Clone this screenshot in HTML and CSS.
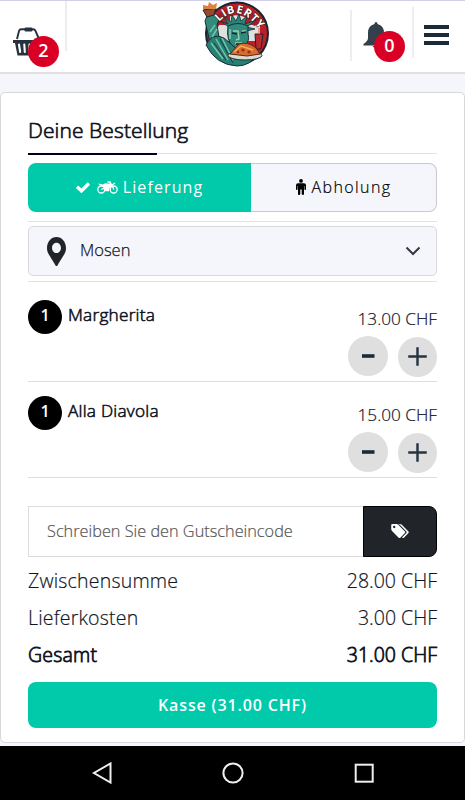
FILE: index.html
```
<!DOCTYPE html>
<html lang="de">
<head>
  <meta charset="UTF-8">
  <meta name="viewport" content="width=device-width, initial-scale=1.0">
  <title>Liberty | Deine Bestellung</title>
  <link rel="stylesheet" href="styles.css">
</head>
<body>
  <header class="topbar">
    <a href="#" class="cart">
      <svg class="basket" viewBox="0 0 28 29">
        <path d="M4 12 6 4Q6.500 2.200 8.500 2.200h11.500Q22 2.200 22.500 4L26 12" fill="none" stroke="#26323e" stroke-width="1.900"/>
        <rect x="11.500" y=".5" width="8" height="4" rx="1.300" fill="#26323e"/>
        <path d="M0 13h29v3h-1.500L25 28.500H4.500L2 16H0z" fill="#26323e"/>
        <path d="M6 17.500l1.200 7.500M11.300 17.500l.5 7.500M16.500 17.500l-.3 7.500" stroke="#fff" stroke-width="2.100" stroke-linecap="round"/>
      </svg>
      <span class="count">2</span>
    </a>
    <a href="#" class="logo">
      <svg viewBox="0 0 68 66">
        <circle cx="35" cy="32.500" r="32" fill="#19242e"/>
        <circle cx="35" cy="32.500" r="30" fill="#bc1f28"/>
        <path d="M28 13h15v11h15v16H43v13H28V40H13V24h15z" fill="#dfe1df"/>
        <path d="M9 24a28 28 0 0 1 51-2l-8 3a20 20 0 0 0-36 1z" fill="#a31d26"/>
        <path id="arc" d="M17 21Q36 0 57 28" fill="none"/>
        <!-- arm and torch -->
        <path d="M3 20 5 15l9-2 3 5-2 6 3 18-9 4z" fill="#328a7c" stroke="#14313a"/>
        <path d="M1 9l13-2-2 7-7 2z" fill="#98482c" stroke="#21242a"/>
        <path d="M1 8V4l5 1 1-4 4 3 4-2-1 6z" fill="#dc8240"/>
        <!-- robe -->
        <path d="M4 44q6-13 18-7l12 10 10-1 12 7q-8 12-21 12Q14 64 4 44z" fill="#287f73" stroke="#14313a"/>
        <path d="M9 42l12 16M14 38l12 21M20 37l11 22M8 31l5-7M10 36l5-8" stroke="#72c5a5" stroke-width="1.500"/>
        <path d="M12 42l12 17M18 38l13 24" stroke="#163f47"/>
        <!-- crown and face -->
        <path d="M27 26 18 20l8 3-4-7 7 5 1-7 4 6 3-7 2 7 6-5-2 8 11-4-9 7 8 2-13 3z" fill="#2b8278" stroke="#14313a" stroke-width=".8"/>
        <path d="M26 25q10-5 20 0v8q2 7-3 11l-6 5-6-4q-7-5-5-20z" fill="#328a7c" stroke="#14313a"/>
        <path d="M31 30h5l1 8-3 1M40 30h4M33 42h7M28 28v10" fill="none" stroke="#90d6b4" stroke-width="1.400"/>
        <path d="M30 32l5 1M39 32l5-1M34 43h6" stroke="#12262f" stroke-width="1.500"/>
        <text class="logo-text"><textPath href="#arc">LIBERTY</textPath></text>
        <!-- drink, pizza and plate -->
        <path d="M53 33h8l-2 15h-5z" fill="#b92932" stroke="#251f29"/>
        <path d="M57 33v-6" stroke="#e77a6b" stroke-width="1.300"/>
        <ellipse cx="43" cy="54.500" rx="17" ry="4.500" fill="#dad9ce" stroke="#202b32"/>
        <path d="M28 53 37 43q9-3 17 4l4 6-13 2z" fill="#d76d2d" stroke="#522720"/>
        <path d="M32 51l7-6 12 4" stroke="#f0b157" stroke-width="1.500" fill="none"/>
        <circle cx="41" cy="49" r="1.600" fill="#982b22"/><circle cx="47" cy="51" r="1.600" fill="#982b22"/><circle cx="36" cy="51" r="1.200" fill="#982b22"/>
      </svg>
    </a>
    <a href="#" class="alerts">
      <svg class="bell" viewBox="0 0 26 26">
        <path d="M13 0q1.500 0 1.500 2 6.500 1.500 6.500 9v5q0 3 4.500 6v1.500H.5V22Q5 19 5 16v-5q0-7.500 6.500-9 0-2 1.500-2zM9.500 24h7q-1 2-3.500 2t-3.500-2z" fill="#333f4b"/>
      </svg>
      <span class="count">0</span>
    </a>
    <a href="#" class="menu">
      <span></span><span></span><span></span>
    </a>
  </header>

  <main class="order">
    <h1>Deine Bestellung</h1>

    <div class="toggle">
      <button class="option active">
        <svg class="check" viewBox="121 270 1550 1252"><path d="M1671 566q0 40-28 68l-724 724-136 136q-28 28-68 28t-68-28l-136-136-362-362q-28-28-28-68t28-68l136-136q28-28 68-28t68 28l294 295 656-657q28-28 68-28t68 28l136 136q28 28 28 68z" fill="#fff"/></svg>
        <svg class="bike" viewBox="0 0 21 13">
          <g fill="none" stroke="#fff">
            <circle cx="4.300" cy="8.500" r="3.500" stroke-width="1.300"/>
            <circle cx="16.700" cy="8.500" r="3.500" stroke-width="1.300"/>
            <path d="M10.500 1H13l4 7.500M15 4l3-2" stroke-width="1.300"/>
          </g>
          <path d="M1.500 2.500 6 3.500q3-1.800 5-.8l2-.5 2 2-2.500 3-.5 3H8.500L7.500 8 4 9V8l3-1.500L5.500 5 2 4z" fill="#fff"/>
        </svg>
        <span>Lieferung</span>
      </button>
      <button class="option">
        <svg class="person" viewBox="0 0 10 16">
          <circle cx="5" cy="1.900" r="1.900"/>
          <path d="M2 4.200h6q2 0 2 2v4q0 .8-.8.800t-.8-.8V7H8v8q0 1-1 1t-1.300-1v-4.500H4.300V15q0 1-1.300 1t-1-1V7h-.4v3.200q0 .8-.8.800T0 10.200v-4q0-2 2-2z"/>
        </svg>
        <span>Abholung</span>
      </button>
    </div>

    <div class="place">
      <div class="select">
        <svg class="pin" viewBox="0 0 384 512" preserveAspectRatio="none"><path d="M172.268 501.670C26.970 291.031 0 269.413 0 192 0 85.961 85.961 0 192 0s192 85.961 192 192c0 77.413-26.970 99.031-172.268 309.670-9.535 13.774-29.930 13.773-39.464 0zM192 282c50 0 90-40 90-90s-40-90-90-90-90 40-90 90 40 90 90 90z" fill="#212529"/></svg>
        <span>Mosen</span>
        <svg class="chevron" viewBox="0 0 16 10"><path d="M1.500 1.500 8 8l6.500-6.500" fill="none" stroke="#343a40" stroke-width="2"/></svg>
      </div>
    </div>

    <div class="item">
      <span class="qty">1</span>
      <h2>Margherita</h2>
      <div class="side">
        <span class="price">13.00 CHF</span>
        <div class="buttons">
          <button class="minus"><svg viewBox="0 0 40 40"><path d="M14 20h12.500" stroke="#1c2b39" stroke-width="3.600"/></svg></button>
          <button class="plus"><svg viewBox="0 0 40 40"><path d="M10.500 19h19M20 9.500v19" stroke="#263442" stroke-width="2.500"/></svg></button>
        </div>
      </div>
    </div>
    <div class="item">
      <span class="qty">1</span>
      <h2>Alla Diavola</h2>
      <div class="side">
        <span class="price">15.00 CHF</span>
        <div class="buttons">
          <button class="minus"><svg viewBox="0 0 40 40"><path d="M14 20h12.500" stroke="#1c2b39" stroke-width="3.600"/></svg></button>
          <button class="plus"><svg viewBox="0 0 40 40"><path d="M10.500 19h19M20 9.500v19" stroke="#263442" stroke-width="2.500"/></svg></button>
        </div>
      </div>
    </div>

    <form class="coupon">
      <input type="text" placeholder="Schreiben Sie den Gutscheincode">
      <button type="button">
        <svg viewBox="0 128 1899 1515"><path d="M448 448q0-53-37.500-90.500t-90.500-37.500-90.500 37.500-37.500 90.500 37.500 90.500 90.500 37.500 90.500-37.500 37.500-90.500zm1067 576q0 53-37 90l-491 492q-39 37-91 37-53 0-90-37l-715-716q-38-37-64.500-101t-26.500-117v-416q0-52 38-90t90-38h416q53 0 117 26.500t102 64.500l715 714q37 39 37 91zm384 0q0 53-37 90l-491 492q-39 37-91 37-36 0-59-14t-53-45l470-470q37-37 37-90 0-52-37-91l-715-714q-38-38-102-64.500t-117-26.500h224q53 0 117 26.500t102 64.500l715 714q37 39 37 91z" fill="#fff"/></svg>
      </button>
    </form>

    <div class="totals">
      <p><span>Zwischensumme</span><span>28.00 CHF</span></p>
      <p><span>Lieferkosten</span><span>3.00 CHF</span></p>
      <p class="total"><span>Gesamt</span><span>31.00 CHF</span></p>
    </div>

    <button class="checkout">Kasse (31.00 CHF)</button>
  </main>

  <footer class="navbar">
    <svg viewBox="0 0 22 22"><path d="M19.500 1.500v19L3 11z"/></svg>
    <svg viewBox="0 0 22 22"><circle cx="11" cy="11" r="9.600"/></svg>
    <svg viewBox="0 0 22 22"><rect x="2.700" y="2.700" width="17" height="17"/></svg>
  </footer>
</body>
</html>
```
FILE: styles.css
```
:root {
  --green: #00caaa;
  --red: #da0025;
  --ink: #10151f;
  --line: #e2e2ee;
}

* {
  box-sizing: border-box;
}

body {
  margin: 0;
  height: 800px;
  display: flex;
  flex-direction: column;
  overflow: hidden;
  font-family: "Open Sans", sans-serif;
  font-weight: 300;
  background: #f5f6fb;
  color: var(--ink);
}

svg {
  display: block;
  flex: none;
}

button {
  font: inherit;
  border: 0;
  padding: 0;
}

/* Header */
.topbar {
  flex: none;
  display: flex;
  height: 74px;
  background: #fff;
  border-top: 1px solid #d2cfe8;
  border-bottom: 2px solid #e0e0e3;
}
.topbar a {
  color: inherit;
  text-decoration: none;
}
.cart {
  display: flex;
  width: 67px;
  height: 50px;
  padding: 26px 0 0 13px;
  border-right: 2px solid #ededf0;
}
.basket {
  width: 28px;
  height: 29px;
}
.count {
  flex: none;
  width: 31px;
  height: 31px;
  margin: 9px 0 0 -13px;
  border-radius: 50%;
  background: var(--red);
  color: #fff;
  font-size: 18px;
  font-weight: 600;
  line-height: 29px;
  text-align: center;
  z-index: 1;
}
.logo {
  margin-left: 135px;
}
.logo svg {
  width: 68px;
  height: 66px;
}
.logo-text {
  font-size: 11px;
  font-weight: 700;
  fill: #fff;
  stroke: #222;
  stroke-width: 1px;
  paint-order: stroke;
  letter-spacing: 0.800px;
}
.alerts {
  display: flex;
  width: 62px;
  height: 51px;
  margin: 9px 0 0 80px;
  padding: 12px 0 0 11px;
  border-left: 2px solid #eeeef0;
}
.bell {
  width: 26px;
  height: 26px;
}
.alerts .count {
  margin-left: -15px;
}
.menu {
  display: flex;
  flex-direction: column;
  gap: 4px;
  width: 53px;
  height: 51px;
  margin-top: 6px;
  padding: 18px 0 0 10px;
  border-left: 2px solid #eeeef0;
}
.menu span {
  width: 25px;
  height: 4px;
  background: #1b2b39;
}

/* Order card */
.order {
  flex: none;
  height: 651px;
  margin-top: 18px;
  padding: 24px 27px 0;
  background: #fff;
  border: 1px solid #d8d8dc;
  border-radius: 5px;
}
h1 {
  height: 37px;
  margin: 0 0 9px;
  border-bottom: 1px solid var(--line);
  font-size: 21px;
  font-weight: 300;
  line-height: 26px;
  letter-spacing: 0.100px;
  -webkit-text-stroke: 0.700px var(--ink);
}
h1::after {
  content: "";
  display: block;
  width: 129px;
  height: 2px;
  margin-top: 10px;
  background: #000018;
}
.toggle {
  display: flex;
  height: 49px;
}
.option {
  display: flex;
  flex: 1;
  justify-content: center;
  align-items: center;
  gap: 6px;
  background: #f5f6fb;
  border: 1px solid #c9cacf;
  border-left: 0;
  border-radius: 0 8px 8px 0;
  color: #000;
  font-size: 16px;
  line-height: 22px;
  letter-spacing: 1.400px;
  padding-bottom: 1px;
  -webkit-text-stroke: 0.200px #000;
}
.option.active {
  flex: none;
  width: 223px;
  gap: 5px;
  background: var(--green);
  border: 0;
  border-radius: 8px 0 0 8px;
  color: #fff;
  font-weight: 400;
  letter-spacing: 1.100px;
  -webkit-text-stroke: 0;
}
.check {
  width: 14px;
  height: 11px;
  margin-right: 2px;
}
.bike {
  width: 21px;
  height: 13px;
}
.person {
  width: 10px;
  height: 16px;
}
.place {
  height: 61px;
  margin-top: 9px;
  padding-top: 4px;
  border-top: 1px solid var(--line);
  border-bottom: 1px solid var(--line);
}
.select {
  display: flex;
  align-items: center;
  height: 50px;
  padding: 0 15px 0 18px;
  background: #f5f6fb;
  border: 1px solid #d8d9dc;
  border-radius: 5px;
  font-size: 16.500px;
  line-height: 22px;
  -webkit-text-stroke: 0.250px var(--ink);
}
.select span {
  margin-bottom: 2px;
}
.pin {
  width: 19px;
  height: 29px;
  margin-right: 14px;
}
.chevron {
  width: 16px;
  height: 10px;
  margin-left: auto;
}

/* Items */
.item {
  display: flex;
  align-items: flex-start;
  height: 96px;
  padding-top: 14px;
  border-bottom: 1px solid #dedede;
}
.place + .item {
  height: 100px;
  padding-top: 18px;
}
.qty {
  width: 34px;
  height: 34px;
  border-radius: 50%;
  background: #000;
  color: #fff;
  font-size: 16px;
  font-weight: 600;
  line-height: 31px;
  text-align: center;
}
.item h2 {
  margin: 4px 0 0 6px;
  font-size: 17.200px;
  font-weight: 300;
  line-height: 22px;
  letter-spacing: 0.250px;
  -webkit-text-stroke: 0.600px var(--ink);
}
.side {
  margin: 7px 0 0 auto;
  text-align: right;
}
.price {
  display: block;
  font-size: 17.200px;
  line-height: 24px;
  -webkit-text-stroke: 0.200px var(--ink);
}
.buttons {
  display: flex;
  justify-content: flex-end;
  gap: 10px;
  margin-top: 5px;
}
.buttons button {
  width: 40px;
  height: 40px;
  border-radius: 50%;
  background: #dfdfdf;
}
.buttons .plus {
  width: 39px;
  margin-top: 1px;
}
.buttons .plus svg {
  width: 39px;
}

/* Coupon */
.coupon {
  display: flex;
  height: 51px;
  margin-top: 28px;
}
.coupon input {
  flex: 1;
  min-width: 0;
  padding: 0 18px 2px;
  border: 1px solid #dcdcdc;
  border-right: 0;
  border-radius: 0;
  font: 300 16.300px "Open Sans", sans-serif;
}
.coupon input::placeholder {
  color: #555;
  -webkit-text-stroke: 0.200px #555;
}
.coupon button {
  display: flex;
  justify-content: center;
  align-items: center;
  width: 74px;
  padding: 0 1px 2px 0;
  background: #212529;
  border: 1px solid #000;
  border-radius: 0 8px 8px 0;
}
.coupon svg {
  width: 18px;
  height: 14px;
}

/* Totals */
.totals {
  margin-top: 5px;
  -webkit-text-stroke: 0.200px var(--ink);
}
.totals p {
  display: flex;
  justify-content: space-between;
  margin: 0;
  font-size: 19.500px;
  line-height: 37px;
}
.totals span:first-child {
  letter-spacing: 0.200px;
}
.totals .total {
  -webkit-text-stroke: 0.800px var(--ink);
}
.checkout {
  width: 100%;
  height: 46px;
  margin-top: 9px;
  border-radius: 8px;
  background: var(--green);
  color: #fff;
  font-size: 16px;
  font-weight: 600;
  line-height: 44px;
  letter-spacing: 0.850px;
}

/* Android navigation */
.navbar {
  flex: none;
  display: flex;
  justify-content: center;
  align-items: center;
  gap: 109px;
  height: 54px;
  margin-top: auto;
  background: #000;
}
.navbar svg {
  width: 22px;
  height: 22px;
  fill: none;
  stroke: #eee;
  stroke-width: 2;
}
```
